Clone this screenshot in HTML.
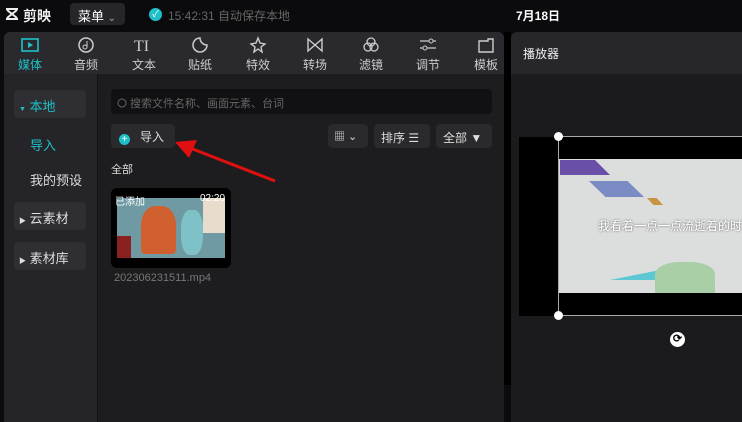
<!DOCTYPE html>
<html><head><meta charset="utf-8"><style>
*{margin:0;padding:0;box-sizing:border-box}
body{width:742px;height:422px;background:#0b0b0d;font-family:"Liberation Sans","Noto Sans CJK SC",sans-serif;color:#ddd;position:relative;overflow:hidden;font-size:12px}
.a{position:absolute}
.tab{position:absolute;top:36px;width:40px;text-align:center;font-size:12px;color:#ccc}
.tab svg{display:block;margin:0 auto 2px;width:20px;height:18px}
.btn{position:absolute;background:#2a2a2d;border-radius:4px;color:#ddd;font-size:12px}
</style></head><body>
<!-- top bar -->
<svg class="a" style="left:5px;top:8px" width="14" height="12" viewBox="0 0 14 12"><path d="M1 1h12M1 11h12M2 2l10 8M12 2L2 10" stroke="#eee" stroke-width="2" fill="none"/></svg>
<div class="a" style="left:23px;top:6px;font-size:14px;font-weight:bold;color:#eee">剪映</div>
<div class="a" style="left:70px;top:3px;width:55px;height:22px;background:#26262a;border-radius:4px;font-size:13px;padding:3px 8px;color:#fff">菜单 <span style="color:#aaa;font-size:10px">⌄</span></div>
<div class="a" style="left:149px;top:8px;width:13px;height:13px;border-radius:50%;background:#1fc0c8;color:#fff;font-size:9px;text-align:center;line-height:13px">✓</div>
<div class="a" style="left:168px;top:7px;font-size:12px;color:#666">15:42:31 自动保存本地</div>
<div class="a" style="left:516px;top:7px;font-size:12px;font-weight:bold;color:#fff">7月18日</div>
<!-- left panel -->
<div class="a" style="left:4px;top:32px;width:500px;height:390px;background:#1d1d1f;border-radius:6px 6px 0 0;overflow:hidden">
 <div class="a" style="left:0;top:0;width:500px;height:42px;background:#2a2a2e"></div>
 <div class="a" style="left:0;top:42px;width:94px;height:348px;background:#252529;border-right:1px solid #111"></div>
</div>
<div class="a" style="left:504px;top:32px;width:7px;height:353px;background:#000"></div>
<!-- tabs -->
<div class="tab" style="left:10px;color:#1fc0c8"><svg viewBox="0 0 20 18"><rect x="2" y="3" width="16" height="12" fill="none" stroke="#1fc0c8" stroke-width="1.6"/><path d="M8 6l5 3-5 3z" fill="#1fc0c8"/></svg>媒体</div>
<div class="tab" style="left:66px"><svg viewBox="0 0 20 18"><circle cx="10" cy="9" r="7" fill="none" stroke="#ccc" stroke-width="1.5"/><circle cx="9" cy="11" r="2" fill="none" stroke="#ccc"/><path d="M11 11V5" stroke="#ccc"/></svg>音频</div>
<div class="tab" style="left:124px"><svg viewBox="0 0 20 18"><text x="0" y="15" font-size="16" font-family="Liberation Serif" fill="#ccc">TI</text></svg>文本</div>
<div class="tab" style="left:180px"><svg viewBox="0 0 20 18"><path d="M10 2a7 7 0 1 0 7 7 7 7 0 0 1-7-7z" fill="none" stroke="#ccc" stroke-width="1.5"/></svg>贴纸</div>
<div class="tab" style="left:238px"><svg viewBox="0 0 20 18"><path d="M10 2l2 5 5 1-4 3 1 5-4-3-4 3 1-5-4-3 5-1z" fill="none" stroke="#ccc" stroke-width="1.4"/></svg>特效</div>
<div class="tab" style="left:295px"><svg viewBox="0 0 20 18"><path d="M3 3v12l14-12v12z" fill="none" stroke="#ccc" stroke-width="1.4"/></svg>转场</div>
<div class="tab" style="left:351px"><svg viewBox="0 0 20 18"><circle cx="10" cy="6" r="4" fill="none" stroke="#ccc" stroke-width="1.3"/><circle cx="7" cy="11" r="4" fill="none" stroke="#ccc" stroke-width="1.3"/><circle cx="13" cy="11" r="4" fill="none" stroke="#ccc" stroke-width="1.3"/></svg>滤镜</div>
<div class="tab" style="left:408px"><svg viewBox="0 0 20 18"><path d="M2 5h16M2 12h16" stroke="#ccc" stroke-width="1.3"/><circle cx="13" cy="5" r="2" fill="#2a2a2e" stroke="#ccc"/><circle cx="7" cy="12" r="2" fill="#2a2a2e" stroke="#ccc"/></svg>调节</div>
<div class="tab" style="left:466px"><svg viewBox="0 0 20 18"><path d="M3 5h9v-2h5v13H3z" fill="none" stroke="#ccc" stroke-width="1.4"/></svg>模板</div>
<!-- sidebar -->
<div class="a" style="left:14px;top:90px;width:72px;height:28px;background:#2f2f33;border-radius:4px;color:#1fc0c8;font-size:13px;padding:6px 5px"><span style="font-size:7px">▼</span> 本地</div>
<div class="a" style="left:30px;top:135px;color:#1fc0c8;font-size:13px">导入</div>
<div class="a" style="left:30px;top:170px;color:#ddd;font-size:13px">我的预设</div>
<div class="a" style="left:14px;top:202px;width:72px;height:28px;background:#2f2f33;border-radius:4px;font-size:13px;padding:6px 5px"><span style="font-size:7px">▶</span> 云素材</div>
<div class="a" style="left:14px;top:242px;width:72px;height:28px;background:#2f2f33;border-radius:4px;font-size:13px;padding:6px 5px"><span style="font-size:7px">▶</span> 素材库</div>
<!-- search -->
<div class="a" style="left:111px;top:89px;width:381px;height:25px;background:#111113;border-radius:4px;color:#666;font-size:11px;padding:6px 6px"><svg width="10" height="10" style="vertical-align:-1px"><circle cx="5" cy="5" r="4" fill="none" stroke="#555" stroke-width="1.2"/></svg> 搜索文件名称、画面元素、台词</div>
<div class="btn" style="left:111px;top:124px;width:64px;height:24px;padding:4px 8px"><span style="display:inline-block;width:11px;height:11px;border-radius:50%;background:#1fc0c8;vertical-align:-1px;color:#fff;font-size:10px;line-height:11px;text-align:center">+</span>&nbsp;&nbsp; 导入</div>
<div class="btn" style="left:328px;top:124px;width:40px;height:24px;padding:4px 6px;font-size:11px">▦ ⌄</div>
<div class="btn" style="left:374px;top:124px;width:56px;height:24px;padding:5px 7px">排序 ☰</div>
<div class="btn" style="left:436px;top:124px;width:56px;height:24px;padding:5px 7px">全部 ▼</div>
<div class="a" style="left:111px;top:161px;font-size:11px">全部</div>
<!-- thumbnail -->
<div class="a" style="left:111px;top:188px;width:120px;height:80px;background:#000;border-radius:6px;overflow:hidden">
 <div class="a" style="left:6px;top:10px;width:108px;height:60px;background:#6f9aa3"></div>
 <div class="a" style="left:30px;top:18px;width:35px;height:48px;background:#d06030;border-radius:40% 40% 10% 10%"></div>
 <div class="a" style="left:70px;top:22px;width:22px;height:45px;background:#7ec2c8;border-radius:40%"></div>
 <div class="a" style="left:92px;top:10px;width:22px;height:35px;background:#e8dccc"></div>
 <div class="a" style="left:6px;top:48px;width:14px;height:22px;background:#8a2020"></div>
 <div class="a" style="left:4px;top:5px;color:#fff;font-size:10px">已添加</div>
 <div class="a" style="left:89px;top:5px;color:#fff;font-size:10px">02:20</div>
</div>
<div class="a" style="left:114px;top:272px;color:#777;font-size:11px">202306231511.mp4</div>
<!-- arrow -->
<svg class="a" style="left:170px;top:136px" width="110" height="50"><line x1="105" y1="45" x2="15" y2="10" stroke="#e01010" stroke-width="3"/><path d="M5 6l22-2-8 18z" fill="#e01010"/></svg>
<!-- right panel -->
<div class="a" style="left:511px;top:32px;width:240px;height:390px;background:#1b1b1e;border-radius:6px 0 0 0;overflow:hidden">
 <div style="height:42px;background:#27272b;padding:13px 12px;font-size:12px;color:#eee">播放器</div>
</div>
<div class="a" style="left:519px;top:137px;width:223px;height:179px;background:#000"></div>
<div class="a" style="left:559px;top:159px;width:183px;height:134px;background:#dcdedd"></div>
<div class="a" style="left:560px;top:160px;width:50px;height:15px;background:#6a4fa8;clip-path:polygon(0 0,70% 0,100% 100%,0 100%)"></div>
<div class="a" style="left:589px;top:181px;width:55px;height:16px;background:#7b8cc4;clip-path:polygon(0 0,70% 0,100% 100%,30% 100%)"></div>
<div class="a" style="left:647px;top:198px;width:16px;height:7px;background:#c89440;clip-path:polygon(0 0,60% 0,100% 100%,40% 100%)"></div>
<div class="a" style="left:598px;top:217px;font-size:12px;color:#fff;text-shadow:0 0 2px #555;white-space:nowrap">我看着一点一点流逝着的时</div>
<div class="a" style="left:610px;top:268px;width:60px;height:12px;background:#5cc8d4;clip-path:polygon(0 100%,100% 0,80% 100%)"></div>
<div class="a" style="left:655px;top:262px;width:60px;height:31px;background:#a8cfa6;border-radius:40% 40% 0 0"></div>
<div class="a" style="left:558px;top:136px;width:184px;height:180px;border:1px solid #aaa;border-right:none"></div>
<div class="a" style="left:554px;top:132px;width:9px;height:9px;border-radius:50%;background:#fff"></div>
<div class="a" style="left:554px;top:311px;width:9px;height:9px;border-radius:50%;background:#fff"></div>
<div class="a" style="left:670px;top:332px;width:15px;height:15px;border-radius:50%;background:#fff;color:#000;font-size:11px;text-align:center;line-height:15px;font-weight:bold">⟳</div>
</body></html>
